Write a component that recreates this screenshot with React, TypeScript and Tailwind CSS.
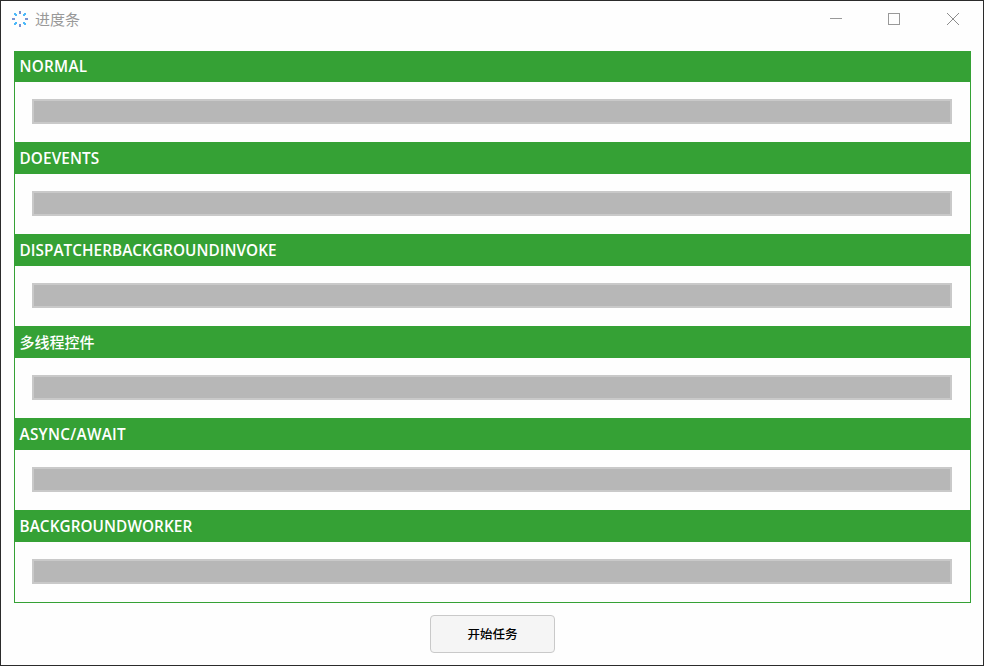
const groups = [
  { title: 'NORMAL', spacing: 'tracking-[0.26px]' },
  { title: 'DOEVENTS', spacing: 'tracking-[0.12px]' },
  { title: 'DISPATCHERBACKGROUNDINVOKE', spacing: 'tracking-[0.06px]' },
  { title: '多线程控件', spacing: 'text-[15px] font-medium' },
  { title: 'ASYNC/AWAIT', spacing: 'tracking-[0.3px]' },
  { title: 'BACKGROUNDWORKER', spacing: 'tracking-[0.08px]' },
];

function SpinnerIcon() {
  return (
    <svg width="20" height="20" viewBox="0 0 20 20" shapeRendering="crispEdges">
      <g fill="#7b93cf">
        <rect x="9" y="1" width="2" height="3" />
        <rect x="9" y="14" width="2" height="3" />
        <rect x="2" y="8" width="3" height="2" />
        <rect x="15" y="8" width="3" height="2" />
      </g>
      <g fill="#4cb9fa">
        <path d="M4 3h2v1h1v2h-2v-1h-1z" />
        <path d="M16 3h-2v1h-1v2h2v-1h1z" />
        <path d="M4 15h2v-1h1v-2h-2v1h-1z" />
        <path d="M16 15h-2v-1h-1v-2h2v1h1z" />
      </g>
    </svg>
  );
}

function TitleBar() {
  return (
    <header className="flex h-[50px] items-start pl-[9px] text-[#999999]">
      <div className="mt-[9px]"><SpinnerIcon /></div>
      <h1 className="mt-[7px] ml-[5px] text-[15px] leading-[22px]">进度条</h1>
      <div className="mt-3 mr-6 ml-auto flex gap-[46px]">
        <svg width="12" height="12" viewBox="0 0 12 12" shapeRendering="crispEdges">
          <path d="M0 5.5h12" stroke="#999" />
        </svg>
        <svg width="12" height="12" viewBox="0 0 12 12" fill="none" shapeRendering="crispEdges">
          <rect x=".5" y=".5" width="11" height="11" stroke="#999" />
        </svg>
        <svg className="ml-px" width="12" height="12" viewBox="0 0 12 12">
          <path d="M0 0l12 12M12 0L0 12" stroke="#8c8c8c" />
        </svg>
      </div>
    </header>
  );
}

export default function App() {
  return (
    <div className="flex h-[666px] w-[984px] flex-col border border-[#2b2b2b] bg-[#fefefe] font-['Open_Sans','Noto_Sans_CJK_SC',sans-serif]">
      <TitleBar />
      <main className="ml-[13px] w-[957px] border-x border-b border-[#35a135]">
        {groups.map((g) => (
          <section key={g.title} className="group">
            <h2 className="flex h-8 items-end bg-[#35a135] pb-1 pl-[4.5px] text-[15.3px] leading-6 font-semibold text-white group-first:h-[31px]">
              <span className={g.spacing}>{g.title}</span>
            </h2>
            <div className="h-[60px] px-[17px] pt-[17px]">
              <div className="h-[25px] w-[920px] border-2 border-[#c9c9c9] bg-[#b7b7b7]" />
            </div>
          </section>
        ))}
      </main>
      <button className="mt-3 ml-[429px] h-[38px] w-[125px] rounded-[4px] border border-[#c9c9c9] bg-[#f5f5f5] pt-0.5 text-[12.5px] leading-5 font-medium text-black">
        开始任务
      </button>
    </div>
  );
}
